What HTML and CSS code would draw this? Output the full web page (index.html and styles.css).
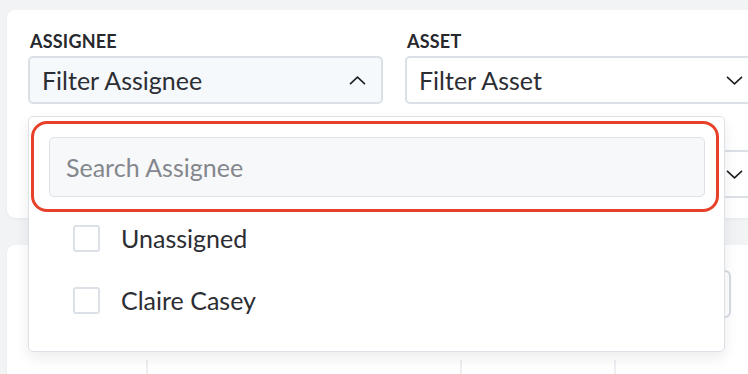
FILE: index.html
```html
<!DOCTYPE html>
<html lang="en">
<head>
    <meta charset="UTF-8">
    <meta name="viewport" content="width=device-width, initial-scale=1.0">
    <title>Work Orders - Filters</title>
    <link rel="stylesheet" href="styles.css">
</head>
<body>
    <div class="card filters">
        <div class="filter-grid">
            <div class="field">
                <label class="field-label">Assignee</label>
                <div class="select select-open">
                    <span>Filter Assignee</span>
                    <svg class="chev" width="17" height="9" viewBox="0 0 17 9"><path d="M1 8.2L8.5 1.2L16 8.2" fill="none" stroke="#1f2024" stroke-width="1.6"/></svg>
                </div>

                <div class="dropdown">
                    <div class="highlight"></div>
                    <input class="search" type="text" placeholder="Search Assignee">
                    <ul class="options">
                        <li><span class="checkbox"></span>Unassigned</li>
                        <li><span class="checkbox"></span>Claire Casey</li>
                    </ul>
                </div>
            </div>
            <div class="field">
                <label class="field-label">Asset</label>
                <div class="select">
                    <span>Filter Asset</span>
                    <svg class="chev" width="17" height="9" viewBox="0 0 17 9"><path d="M1 0.8L8.5 7.8L16 0.8" fill="none" stroke="#1f2024" stroke-width="1.6"/></svg>
                </div>
            </div>
            <div class="field">
                <div class="select">
                    <svg class="chev" width="17" height="9" viewBox="0 0 17 9"><path d="M1 0.8L8.5 7.8L16 0.8" fill="none" stroke="#1f2024" stroke-width="1.6"/></svg>
                </div>
            </div>
            <div class="field">
                <div class="select">
                    <svg class="chev" width="17" height="9" viewBox="0 0 17 9"><path d="M1 0.8L8.5 7.8L16 0.8" fill="none" stroke="#1f2024" stroke-width="1.6"/></svg>
                </div>
            </div>
        </div>
    </div>

    <div class="card results">
        <div class="toolbar">
            <div class="search-box"></div>
            <button class="btn"></button>
        </div>
        <table>
            <thead>
                <tr>
                    <th></th>
                    <th></th>
                    <th></th>
                    <th></th>
                </tr>
            </thead>
        </table>
    </div>
</body>
</html>
```

FILE: styles.css
```css
body {
    margin: 0;
    background: #f2f3f5;
    font-family: Lato, "Open Sans", sans-serif;
    color: #2c2e33;
    width: 748px;
    height: 374px;
    overflow: hidden;
}

.card {
    background: #fff;
    border-radius: 8px;
    width: 820px;
    margin-left: 7px;
    box-shadow: 0 1px 3px rgba(0, 0, 0, 0.05);
}

.filters { margin-top: 10px; padding: 22px 0 20px 21px; }

.filter-grid {
    display: grid;
    grid-template-columns: 355px 355px;
    column-gap: 22px;
    row-gap: 46px;
}

.field { position: relative; }

.field-label {
    display: block;
    font-size: 18px;
    font-weight: 700;
    text-transform: uppercase;
    letter-spacing: 0.2px;
    color: #26282d;
    line-height: 18px;
    margin: 0 0 6px 2px;
}

.select {
    height: 48px;
    box-sizing: border-box;
    border: 2px solid #dbe0e7;
    border-radius: 5px;
    background: #fff;
    display: flex;
    align-items: center;
    justify-content: space-between;
    padding: 0 15px 0 12px;
    font-size: 25px;
    color: #2c2e33;
}

.select .chev { margin-left: auto; }

.select-open { background: #f5f9fc; }

.dropdown {
    position: absolute;
    top: 84px;
    left: 0;
    z-index: 5;
    width: 697px;
    box-sizing: border-box;
    background: #fff;
    border: 1px solid #dde1e8;
    border-radius: 5px;
    box-shadow: 0 6px 14px rgba(20, 30, 50, 0.08);
    padding: 20px 19px 20px 20px;
}

.highlight {
    position: absolute;
    top: 4px;
    left: 2px;
    width: 688px;
    height: 91px;
    box-sizing: border-box;
    border: 3px solid #e8412a;
    border-radius: 16px;
}

.search {
    display: block;
    width: 100%;
    height: 60px;
    box-sizing: border-box;
    background: #f7f8fa;
    border: 1px solid #dde1e8;
    border-radius: 5px;
    padding: 0 16px;
    font-family: inherit;
    font-size: 25px;
    color: #2c2e33;
    outline: none;
}

.search::placeholder { color: #84878d; }

.options { list-style: none; margin: 10px 0 0; padding: 0; }

.options li {
    height: 62px;
    display: flex;
    align-items: center;
    padding-left: 24px;
    font-size: 25px;
    color: #2c2e33;
}

.checkbox {
    width: 27px;
    height: 27px;
    box-sizing: border-box;
    border: 2px solid #dce1e8;
    border-radius: 3px;
    margin-right: 21px;
}

.results { margin-top: 27px; height: 200px; padding-top: 25px; }

.toolbar {
    display: flex;
    justify-content: space-between;
    padding: 0 96px 0 60px;
    height: 48px;
}

.search-box {
    width: 300px;
    border: 2px solid #dbe0e7;
    border-radius: 5px;
    box-sizing: border-box;
}

.btn {
    width: 120px;
    border: 2px solid #d6dbe3;
    border-radius: 6px;
    background: #fff;
}

table { border-collapse: collapse; margin-top: 42px; width: 820px; }
th {
    height: 40px;
    padding: 0 10px;
    border-left: 2px solid #eceef1;
}
th:first-child { border-left: none; width: 119px; }
th:nth-child(2) { width: 292px; }
th:nth-child(3) { width: 132px; }
```
